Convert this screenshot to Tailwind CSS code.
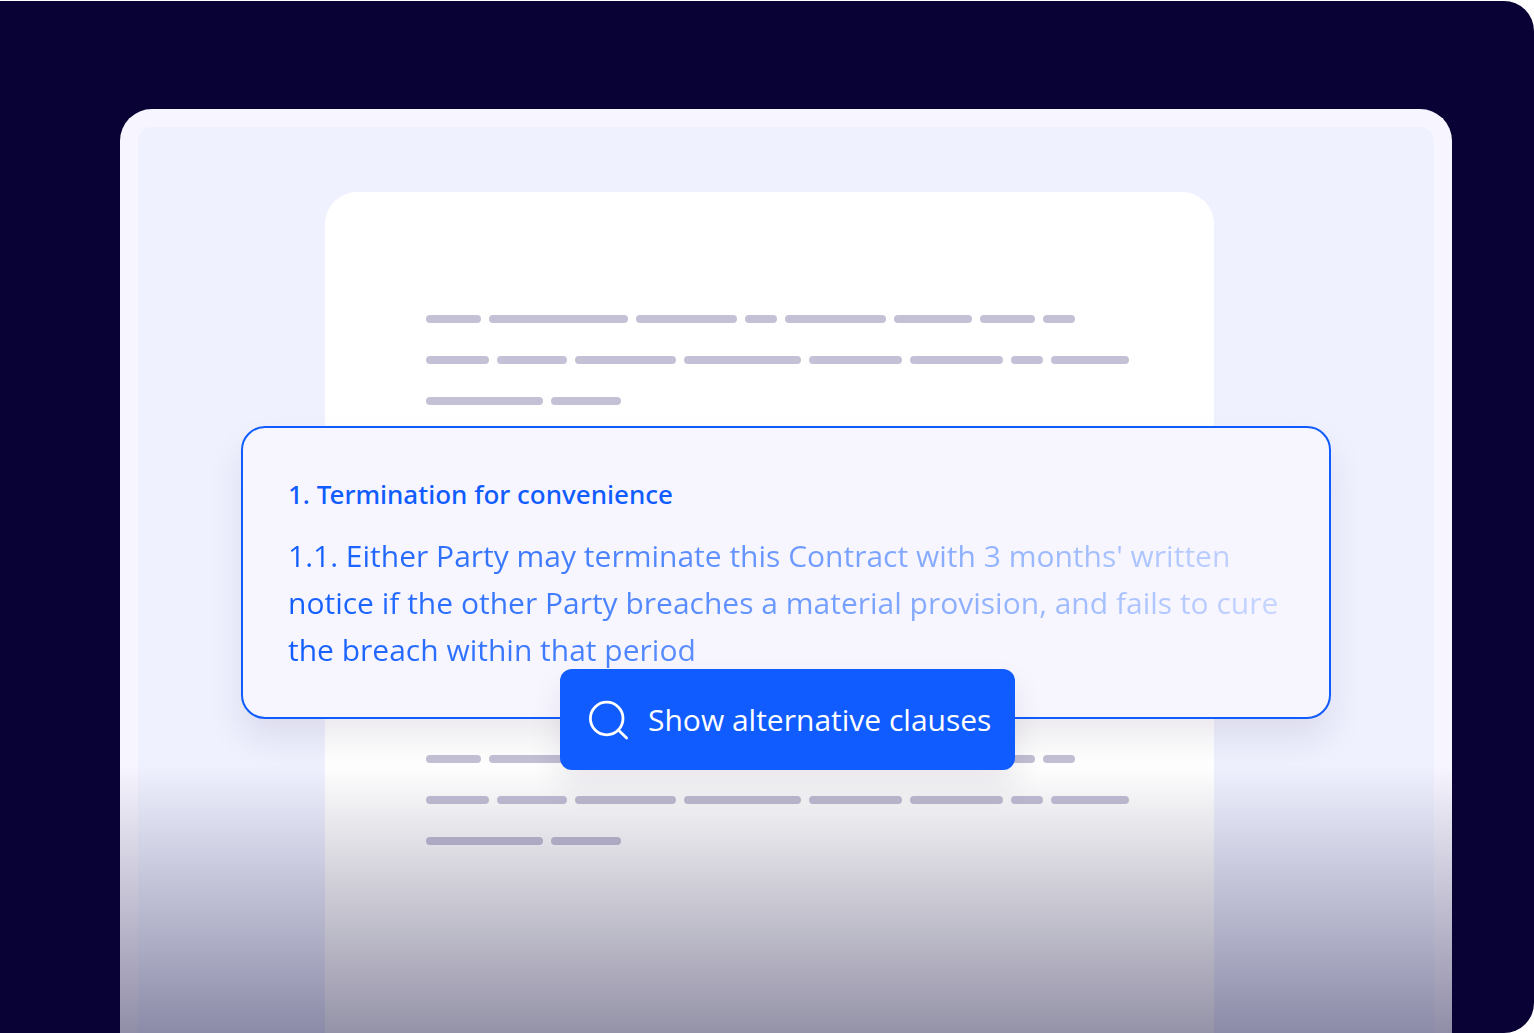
<!DOCTYPE html>
<html lang="en">
<head>
    <meta charset="UTF-8">
    <meta name="viewport" content="width=device-width, initial-scale=1.0">
    <title>Alternative clauses</title>
    <script src="https://cdn.jsdelivr.net/npm/@tailwindcss/browser@4"></script>
</head>
<body class="bg-white font-['Open_Sans','Noto_Sans',sans-serif]">
    <div class="min-h-screen flex flex-col pt-px">
        <main class="flex-1 flex bg-[#080334] rounded-r-[30px] pt-[108px] pl-[120px] pr-[82px]">
            <!-- Panel -->
            <div class="relative flex-1 flex bg-[#eff1ff] border-[#f7f5ff] border-x-[18px] border-t-[18px] rounded-t-[32px] pt-[65px] pl-[187px] pr-[220px]">
                <!-- Document -->
                <article class="flex-1 bg-white rounded-t-[32px] pt-[123px] pl-[101px] pr-[84px]">
                    <div class="flex flex-col gap-[33px]">
                        <div class="flex gap-2">
                            <span class="h-2 rounded-full bg-[#c4c0d6] w-[55px]"></span>
                            <span class="h-2 rounded-full bg-[#c4c0d6] w-[139px]"></span>
                            <span class="h-2 rounded-full bg-[#c4c0d6] w-[101px]"></span>
                            <span class="h-2 rounded-full bg-[#c4c0d6] w-8"></span>
                            <span class="h-2 rounded-full bg-[#c4c0d6] w-[101px]"></span>
                            <span class="h-2 rounded-full bg-[#c4c0d6] w-[78px]"></span>
                            <span class="h-2 rounded-full bg-[#c4c0d6] w-[55px]"></span>
                            <span class="h-2 rounded-full bg-[#c4c0d6] w-8"></span>
                        </div>
                        <div class="flex gap-2">
                            <span class="h-2 rounded-full bg-[#c4c0d6] w-[63px]"></span>
                            <span class="h-2 rounded-full bg-[#c4c0d6] w-[70px]"></span>
                            <span class="h-2 rounded-full bg-[#c4c0d6] w-[101px]"></span>
                            <span class="h-2 rounded-full bg-[#c4c0d6] w-[117px]"></span>
                            <span class="h-2 rounded-full bg-[#c4c0d6] w-[93px]"></span>
                            <span class="h-2 rounded-full bg-[#c4c0d6] w-[93px]"></span>
                            <span class="h-2 rounded-full bg-[#c4c0d6] w-8"></span>
                            <span class="h-2 rounded-full bg-[#c4c0d6] w-[78px]"></span>
                        </div>
                        <div class="flex gap-2">
                            <span class="h-2 rounded-full bg-[#c4c0d6] w-[117px]"></span>
                            <span class="h-2 rounded-full bg-[#c4c0d6] w-[70px]"></span>
                        </div>
                    </div>

                    <!-- Clause card, wider than the page behind it -->
                    <section class="relative z-20 mt-[21px] -ml-[185px] -mr-[201px] bg-[#f7f6ff] border-2 border-[#105cff] rounded-3xl shadow-[0_20px_36px_rgba(30,10,60,0.09)] pt-[45px] pb-[44px] pl-[45px] pr-[40px]">
                        <h2 class="font-['Noto_Sans',sans-serif] text-[26px] leading-[42px] font-medium text-[#105cff]">1. Termination for convenience</h2>
                        <p class="mt-[17px] text-[30px] leading-[47px] text-transparent bg-clip-text bg-linear-to-r from-[#105cff] to-[#105cff]/20">
                            1.1. Either Party may terminate this Contract with 3 months' written notice if the other Party breaches a material provision, and fails to cure the breach within that period
                        </p>
                        <button type="button" class="absolute left-[317px] -bottom-[53px] flex items-center gap-[18px] h-[101px] pl-[28px] pr-6 rounded-xl bg-[#105cff] text-white text-[30px] whitespace-nowrap shadow-[0_16px_32px_rgba(30,10,60,0.09)]">
                            <svg class="w-[42px] h-[42px]" viewBox="0 0 42 42" fill="none" stroke="currentColor" stroke-width="2.8" stroke-linecap="round" aria-hidden="true">
                                <circle cx="18.7" cy="19.5" r="16.3"/>
                                <path d="M30.4 31 38.6 39"/>
                            </svg>
                            Show alternative clauses
                        </button>
                    </section>

                    <div class="flex flex-col gap-[33px] mt-9">
                        <div class="flex gap-2">
                            <span class="h-2 rounded-full bg-[#c4c0d6] w-[55px]"></span>
                            <span class="h-2 rounded-full bg-[#c4c0d6] w-[139px]"></span>
                            <span class="h-2 rounded-full bg-[#c4c0d6] w-[101px]"></span>
                            <span class="h-2 rounded-full bg-[#c4c0d6] w-8"></span>
                            <span class="h-2 rounded-full bg-[#c4c0d6] w-[101px]"></span>
                            <span class="h-2 rounded-full bg-[#c4c0d6] w-[78px]"></span>
                            <span class="h-2 rounded-full bg-[#c4c0d6] w-[55px]"></span>
                            <span class="h-2 rounded-full bg-[#c4c0d6] w-8"></span>
                        </div>
                        <div class="flex gap-2">
                            <span class="h-2 rounded-full bg-[#c4c0d6] w-[63px]"></span>
                            <span class="h-2 rounded-full bg-[#c4c0d6] w-[70px]"></span>
                            <span class="h-2 rounded-full bg-[#c4c0d6] w-[101px]"></span>
                            <span class="h-2 rounded-full bg-[#c4c0d6] w-[117px]"></span>
                            <span class="h-2 rounded-full bg-[#c4c0d6] w-[93px]"></span>
                            <span class="h-2 rounded-full bg-[#c4c0d6] w-[93px]"></span>
                            <span class="h-2 rounded-full bg-[#c4c0d6] w-8"></span>
                            <span class="h-2 rounded-full bg-[#c4c0d6] w-[78px]"></span>
                        </div>
                        <div class="flex gap-2">
                            <span class="h-2 rounded-full bg-[#c4c0d6] w-[117px]"></span>
                            <span class="h-2 rounded-full bg-[#c4c0d6] w-[70px]"></span>
                        </div>
                    </div>
                </article>

                <!-- Fade into the background -->
                <div class="absolute z-10 -inset-x-[18px] bottom-0 h-[268px] bg-linear-to-b from-[#080334]/0 to-[#080334]/43 pointer-events-none"></div>
            </div>
        </main>
    </div>
</body>
</html>
